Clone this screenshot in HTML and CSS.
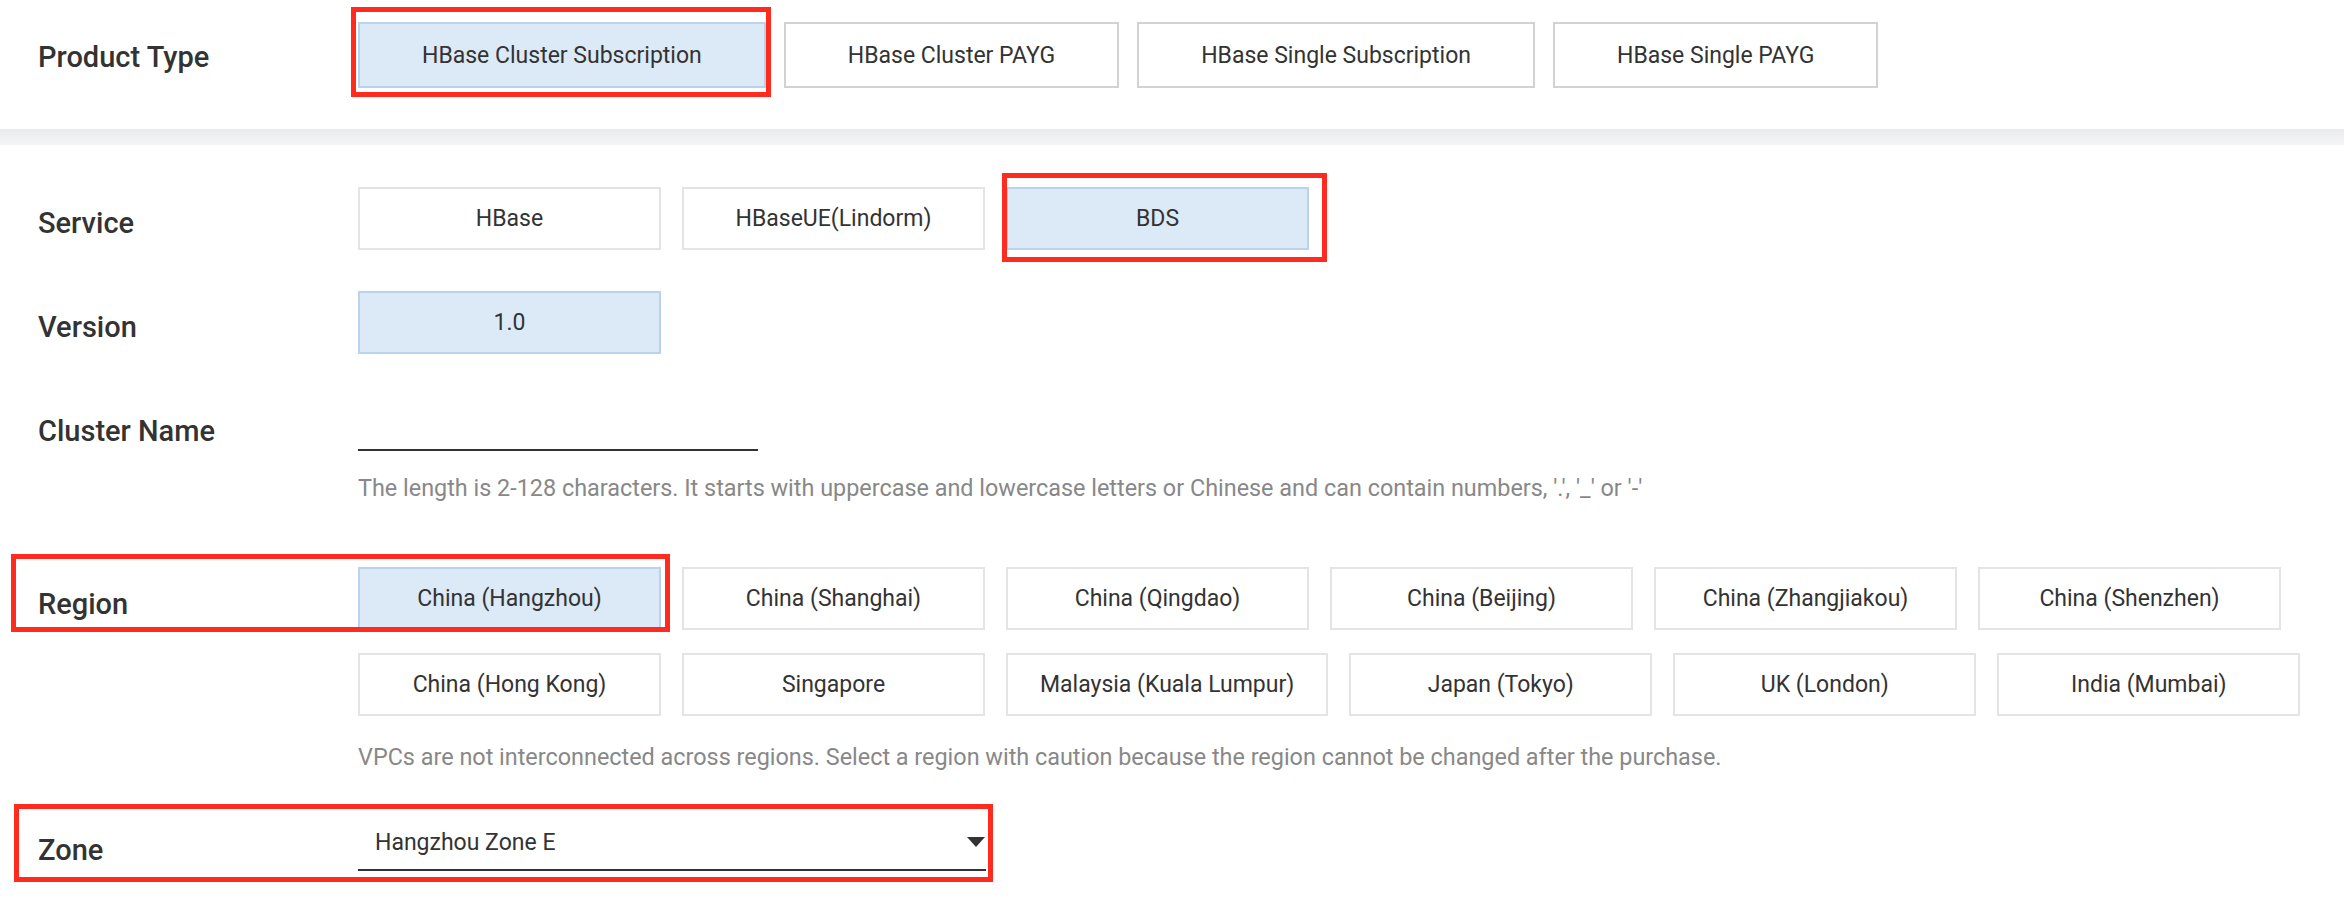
FILE: index.html
```html
<!DOCTYPE html>
<html lang="en">
<head>
  <meta charset="UTF-8">
  <meta name="viewport" content="width=device-width, initial-scale=1.0">
  <title>HBase Purchase</title>
  <link rel="stylesheet" href="styles.css">
</head>
<body>
  <div class="section top">
    <div class="row">
      <div class="label">Product Type</div>
      <div class="options">
        <div class="mark-wrap">
          <button class="opt big selected">HBase Cluster Subscription</button>
          <span class="mark mark-product"></span>
        </div>
        <button class="opt big">HBase Cluster PAYG</button>
        <button class="opt big">HBase Single Subscription</button>
        <button class="opt big">HBase Single PAYG</button>
      </div>
    </div>
  </div>
  <div class="band"></div>
  <div class="section main">
    <div class="row">
      <div class="label">Service</div>
      <div class="options">
        <button class="opt">HBase</button>
        <button class="opt">HBaseUE(Lindorm)</button>
        <div class="mark-wrap">
          <button class="opt selected">BDS</button>
          <span class="mark mark-bds"></span>
        </div>
      </div>
    </div>

    <div class="row version">
      <div class="label">Version</div>
      <div class="options">
        <button class="opt selected">1.0</button>
      </div>
    </div>

    <div class="row line-row cluster">
      <div class="label">Cluster Name</div>
      <div class="text-input"></div>
    </div>
    <p class="hint hint-cluster">The length is 2-128 characters. It starts with uppercase and lowercase letters or Chinese and can contain numbers, '.', '_' or '-'</p>

    <div class="row region">
      <span class="mark mark-region"></span>
      <div class="label">Region</div>
      <div class="options wrap">
        <button class="opt selected">China (Hangzhou)</button>
        <button class="opt">China (Shanghai)</button>
        <button class="opt">China (Qingdao)</button>
        <button class="opt">China (Beijing)</button>
        <button class="opt">China (Zhangjiakou)</button>
        <button class="opt">China (Shenzhen)</button>
        <button class="opt">China (Hong Kong)</button>
        <button class="opt">Singapore</button>
        <button class="opt">Malaysia (Kuala Lumpur)</button>
        <button class="opt">Japan (Tokyo)</button>
        <button class="opt">UK (London)</button>
        <button class="opt">India (Mumbai)</button>
      </div>
    </div>
    <p class="hint hint-region">VPCs are not interconnected across regions. Select a region with caution because the region cannot be changed after the purchase.</p>

    <div class="row line-row zone">
      <span class="mark mark-zone"></span>
      <div class="label">Zone</div>
      <div class="select">
        <span class="select-text">Hangzhou Zone E</span>
        <span class="arrow"></span>
      </div>
    </div>
  </div>
</body>
</html>
```

FILE: styles.css
```css
* {
  margin: 0;
  padding: 0;
  box-sizing: border-box;
}
body {
  font-family: 'Roboto', 'Liberation Sans', sans-serif;
  color: #333;
  background: #fff;
  width: 2344px;
  height: 900px;
  overflow: hidden;
}
.section {
  padding-left: 38px;
}
.top {
  height: 129px;
  padding-top: 22px;
}
.band {
  height: 16px;
  background: linear-gradient(#e9eaec, #f5f5f6);
}
.main {
  padding-top: 42px;
}
.row {
  display: flex;
  align-items: center;
  position: relative;
}
.label {
  width: 320px;
  flex-shrink: 0;
  font-size: 29px;
  font-weight: 500;
  line-height: 34px;
  margin-top: 8px;
  color: #333;
}
.top .label {
  margin-top: 4px;
}
.options {
  display: flex;
  gap: 21px;
}
.options.wrap {
  flex-wrap: wrap;
  row-gap: 23px;
  width: 1986px;
}
.top .options {
  gap: 18px;
}
.opt {
  font-family: inherit;
  font-size: 23px;
  color: #333;
  background: #fff;
  border: 2px solid #e4e4e4;
  height: 63px;
  min-width: 303px;
  padding: 0 32px;
  cursor: pointer;
}
.opt.big {
  height: 66px;
  min-width: 0;
  padding: 0 62px;
  border-color: #d2d2d2;
}
.opt.selected {
  background: #dce9f6;
  border-color: #b9d3ea;
}
.mark-wrap {
  position: relative;
  display: flex;
}
.mark {
  position: absolute;
  border: 5px solid #ff2b1f;
  pointer-events: none;
}
.mark-product {
  left: -7px;
  right: -5px;
  top: -15px;
  bottom: -9px;
}
.mark-bds {
  left: -4px;
  right: -18px;
  top: -14px;
  bottom: -12px;
}
.version {
  margin-top: 41px;
}
.line-row .label {
  margin-top: 0;
}
.cluster {
  margin-top: 57px;
}
.text-input {
  width: 400px;
  height: 40px;
  border-bottom: 2px solid #333;
}
.hint {
  margin-left: 320px;
  font-size: 23.4px;
  line-height: 28px;
  color: #888;
}
.hint-cluster {
  margin-top: 23px;
}
.region {
  margin-top: 65px;
  align-items: flex-start;
}
.region .label {
  margin-top: 20px;
}
.mark-region {
  left: -27px;
  top: -13px;
  width: 659px;
  height: 78px;
}
.hint-region {
  margin-top: 27px;
}
.zone {
  margin-top: 58px;
}
.mark-zone {
  left: -24px;
  top: -25px;
  width: 979px;
  height: 78px;
}
.select {
  width: 628px;
  height: 42px;
  display: flex;
  align-items: center;
  justify-content: space-between;
  padding: 0 1px 14px 17px;
  border-bottom: 2px solid #333;
}
.select-text {
  font-size: 23px;
  color: #333;
}
.arrow {
  width: 0;
  height: 0;
  border-left: 9px solid transparent;
  border-right: 9px solid transparent;
  border-top: 10px solid #333;
}
```
